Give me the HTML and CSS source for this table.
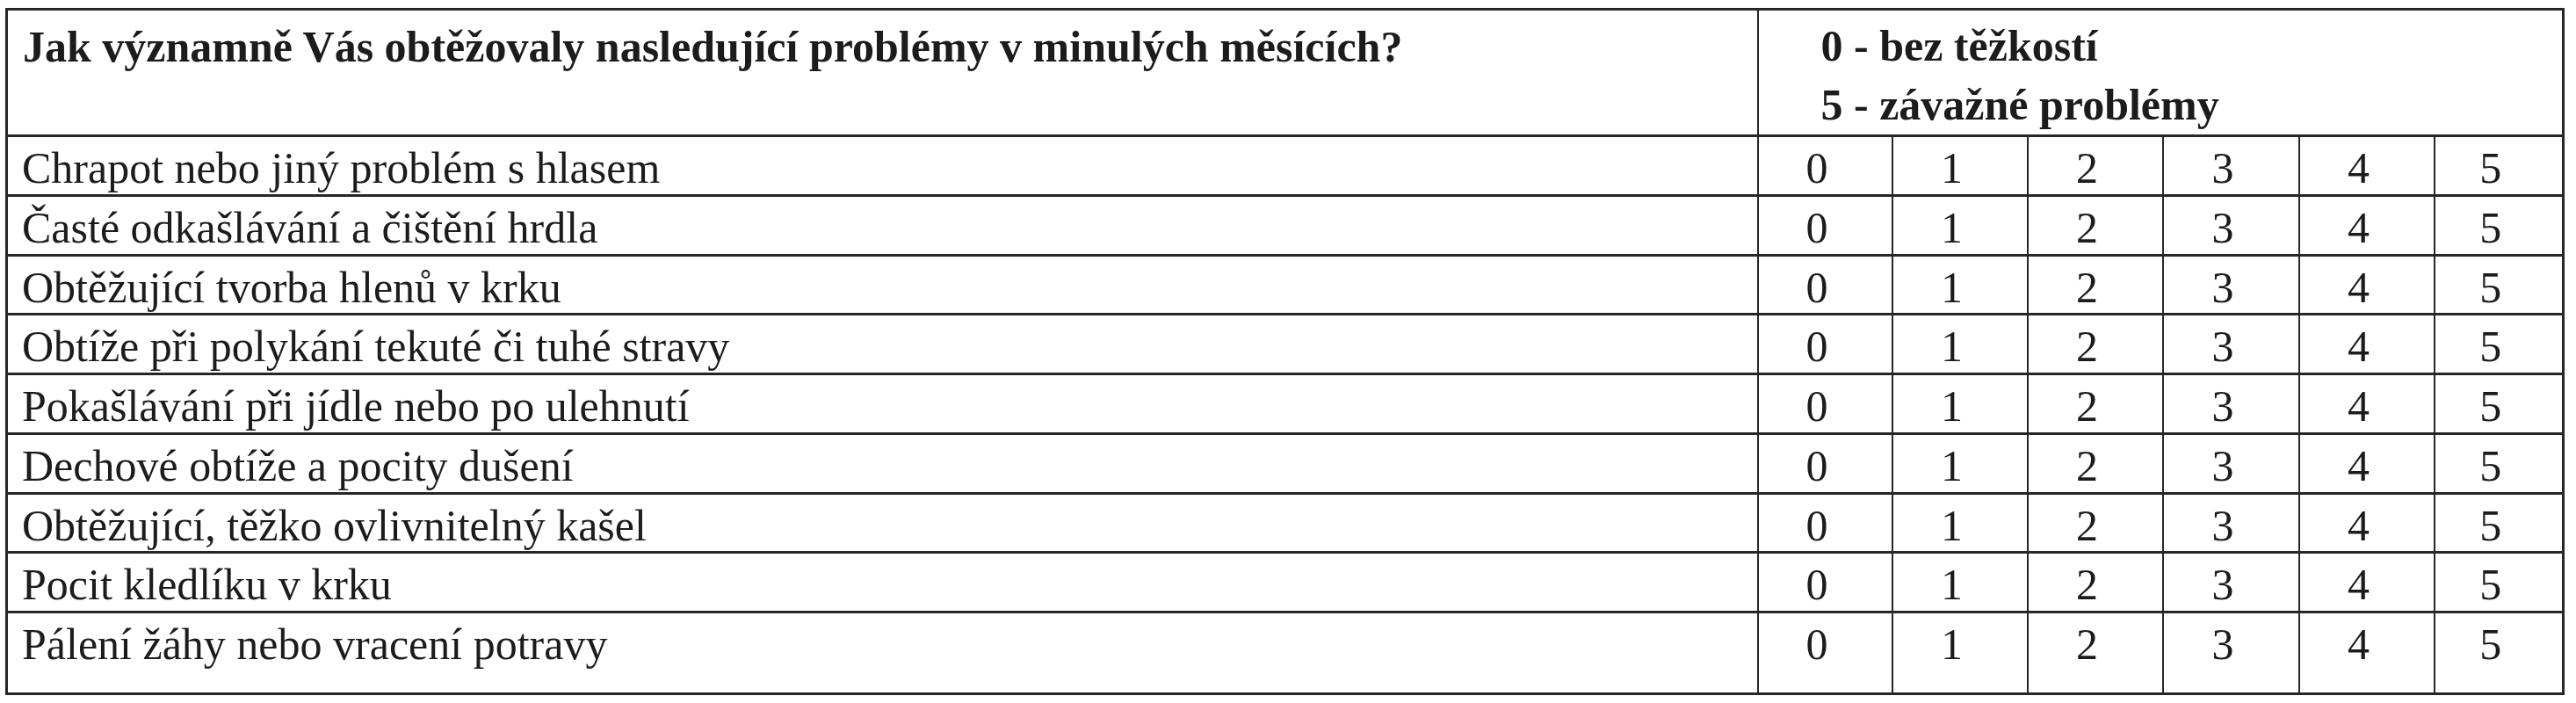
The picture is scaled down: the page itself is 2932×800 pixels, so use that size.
FILE: index.html
```html
<!DOCTYPE html>
<html lang="cs">
<head>
<meta charset="utf-8">
<title>Dotazník</title>
<link rel="stylesheet" href="styles.css">
</head>
<body>
<table class="survey">
  <colgroup>
    <col class="c-label">
    <col class="c-s0">
    <col class="c-s1">
    <col class="c-s2">
    <col class="c-s3">
    <col class="c-s4">
    <col class="c-s5">
  </colgroup>
  <thead>
    <tr class="head-row">
      <th class="q">Jak významně Vás obtěžovaly nasledující problémy v minulých měsících?</th>
      <th class="legend" colspan="6">0 - bez těžkostí<br>5 - závažné problémy</th>
    </tr>
  </thead>
  <tbody>
    <tr><td class="label">Chrapot nebo jiný problém s hlasem</td><td>0</td><td>1</td><td>2</td><td>3</td><td>4</td><td>5</td></tr>
    <tr><td class="label">Časté odkašlávání a čištění hrdla</td><td>0</td><td>1</td><td>2</td><td>3</td><td>4</td><td>5</td></tr>
    <tr><td class="label">Obtěžující tvorba hlenů v krku</td><td>0</td><td>1</td><td>2</td><td>3</td><td>4</td><td>5</td></tr>
    <tr><td class="label">Obtíže při polykání tekuté či tuhé stravy</td><td>0</td><td>1</td><td>2</td><td>3</td><td>4</td><td>5</td></tr>
    <tr><td class="label">Pokašlávání při jídle nebo po ulehnutí</td><td>0</td><td>1</td><td>2</td><td>3</td><td>4</td><td>5</td></tr>
    <tr><td class="label">Dechové obtíže a pocity dušení</td><td>0</td><td>1</td><td>2</td><td>3</td><td>4</td><td>5</td></tr>
    <tr><td class="label">Obtěžující, těžko ovlivnitelný kašel</td><td>0</td><td>1</td><td>2</td><td>3</td><td>4</td><td>5</td></tr>
    <tr><td class="label">Pocit kledlíku v krku</td><td>0</td><td>1</td><td>2</td><td>3</td><td>4</td><td>5</td></tr>
    <tr class="last-row"><td class="label">Pálení žáhy nebo vracení potravy</td><td>0</td><td>1</td><td>2</td><td>3</td><td>4</td><td>5</td></tr>
  </tbody>
</table>
</body>
</html>
```
FILE: styles.css
```css
html, body {
  margin: 0;
  background: #ffffff;
}
body {
  padding: 9px 0 0 6px;
  font-family: "Liberation Serif", "Times New Roman", serif;
  color: #1c1c1c;
}
.survey {
  border-collapse: collapse;
  table-layout: fixed;
  width: 2910px;
  border: 3px solid #262626;
  font-size: 50px;
}
.c-label { width: 1993px; }
.c-s0 { width: 153px; }
.c-s1 { width: 154px; }
.c-s2 { width: 154px; }
.c-s3 { width: 155px; }
.c-s4 { width: 154px; }
.c-s5 { width: 147px; }

.survey th,
.survey td {
  border: 2px solid #262626;
  vertical-align: top;
  padding: 0;
  text-align: center;
  white-space: nowrap;
}
.survey tbody tr {
  border-top: 3px solid #262626;
}
.head-row {
  height: 137px;
}
.survey th {
  font-weight: bold;
  text-align: left;
}
.survey th.q {
  padding: 12px 0 0 17px;
}
.survey th.legend {
  padding: 7px 0 0 71px;
  line-height: 67px;
}
.survey tbody tr {
  height: 67.75px;
}
.survey tbody tr.last-row {
  height: 93px;
}
.survey td {
  padding-top: 6px;
  padding-right: 18px;
}
.survey td.label {
  text-align: left;
  padding-left: 16px;
  padding-right: 0;
}
```
